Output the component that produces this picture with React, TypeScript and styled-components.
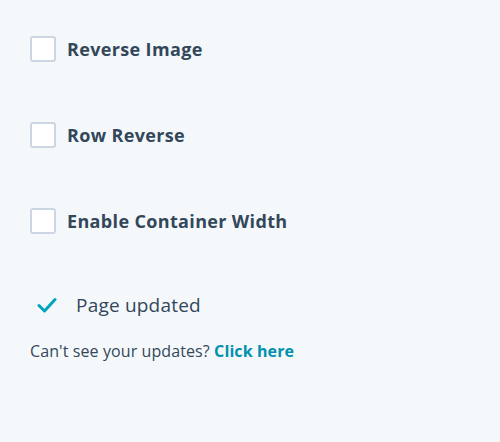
import * as React from 'react';
import styled, { createGlobalStyle } from 'styled-components';

const GlobalStyle = createGlobalStyle`
  html, body {
    margin: 0;
    padding: 0;
    background: #f5f8fa;
  }
  body {
    font-family: "Open Sans", Inter, sans-serif;
    color: #33475b;
  }
`;

const Panel = styled.div`
  width: 500px;
  height: 442px;
  padding: 36px 0 0 30px;
  box-sizing: border-box;
  display: flex;
  flex-direction: column;
`;

const OptionList = styled.div`
  display: flex;
  flex-direction: column;
  gap: 60px;
`;

const Option = styled.label`
  display: flex;
  align-items: center;
  gap: 11px;
  height: 26px;
  cursor: pointer;
`;

const Box = styled.span`
  width: 22px;
  height: 22px;
  border: 2px solid #cbd6e2;
  border-radius: 3px;
  background: #ffffff;
  flex-shrink: 0;
`;

const OptionLabel = styled.span`
  font-size: 18px;
  font-weight: 700;
  letter-spacing: 0.35px;
  color: #33475b;
`;

const Status = styled.div`
  display: flex;
  align-items: center;
  gap: 19px;
  margin-top: 58px;
  padding-left: 7px;
  font-size: 19px;
  letter-spacing: 0.2px;
  color: #33475b;
`;

const Hint = styled.p`
  margin: 22px 0 0;
  font-size: 16px;
  letter-spacing: 0.1px;
  color: #33475b;
`;

const HintLink = styled.a`
  color: #0091ae;
  font-weight: 700;
  text-decoration: none;
`;

const options = ['Reverse Image', 'Row Reverse', 'Enable Container Width'];

export default function App() {
  return (
    <Panel>
      <GlobalStyle />
      <OptionList>
        {options.map((name) => (
          <Option key={name}>
            <Box />
            <OptionLabel>{name}</OptionLabel>
          </Option>
        ))}
      </OptionList>
      <Status>
        <svg width="20" height="16" viewBox="0 0 20 16" fill="none">
          <path
            d="M2 8.5 L7.5 14 L18 2.5"
            stroke="#00a4bd"
            strokeWidth="3"
            strokeLinecap="round"
            strokeLinejoin="round"
          />
        </svg>
        Page updated
      </Status>
      <Hint>
        Can't see your updates? <HintLink href="#">Click here</HintLink>
      </Hint>
    </Panel>
  );
}
